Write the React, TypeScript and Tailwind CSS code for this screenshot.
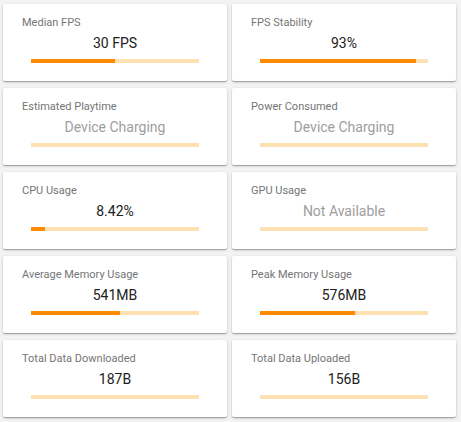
import React from "react";

type Stat = {
  title: string;
  value: string;
  percent: number;
  muted?: boolean;
};

const stats: Stat[] = [
  { title: "Median FPS", value: "30 FPS", percent: 50 },
  { title: "FPS Stability", value: "93%", percent: 93 },
  { title: "Estimated Playtime", value: "Device Charging", percent: 0, muted: true },
  { title: "Power Consumed", value: "Device Charging", percent: 0, muted: true },
  { title: "CPU Usage", value: "8.42%", percent: 8.42 },
  { title: "GPU Usage", value: "Not Available", percent: 0, muted: true },
  { title: "Average Memory Usage", value: "541MB", percent: (541 / 1024) * 100 },
  { title: "Peak Memory Usage", value: "576MB", percent: (576 / 1024) * 100 },
  { title: "Total Data Downloaded", value: "187B", percent: 0 },
  { title: "Total Data Uploaded", value: "156B", percent: 0 },
];

const StatCard: React.FC<{ stat: Stat }> = ({ stat }) => {
  return (
    <div className="bg-white rounded-[2px] h-[77px] pt-[11px] shadow-[0_1px_3px_rgba(0,0,0,0.2),0_1px_1px_rgba(0,0,0,0.14),0_2px_1px_-1px_rgba(0,0,0,0.12)]">
      <div className="pl-[19px] text-[11px] leading-[16px] text-[#757575]">{stat.title}</div>
      <div
        className={`mt-[2px] text-center text-[14px] leading-[20px] ${
          stat.muted ? "text-[#9e9e9e]" : "text-[#212121]"
        }`}
      >
        {stat.value}
      </div>
      <div className="mx-auto mt-[6px] h-[4px] w-3/4 bg-[#ffe0b2]">
        <div className="h-full bg-[#ff8c00]" style={{ width: `${stat.percent}%` }} />
      </div>
    </div>
  );
};

export default function App() {
  return (
    <div className="w-[461px] h-[422px] bg-[#f3f3f3] font-['Roboto',sans-serif] pl-[3px] pt-[4px]">
      <div className="grid grid-cols-[224px_224px] gap-x-[5px] gap-y-[7px]">
        {stats.map((s) => (
          <StatCard key={s.title} stat={s} />
        ))}
      </div>
    </div>
  );
}
